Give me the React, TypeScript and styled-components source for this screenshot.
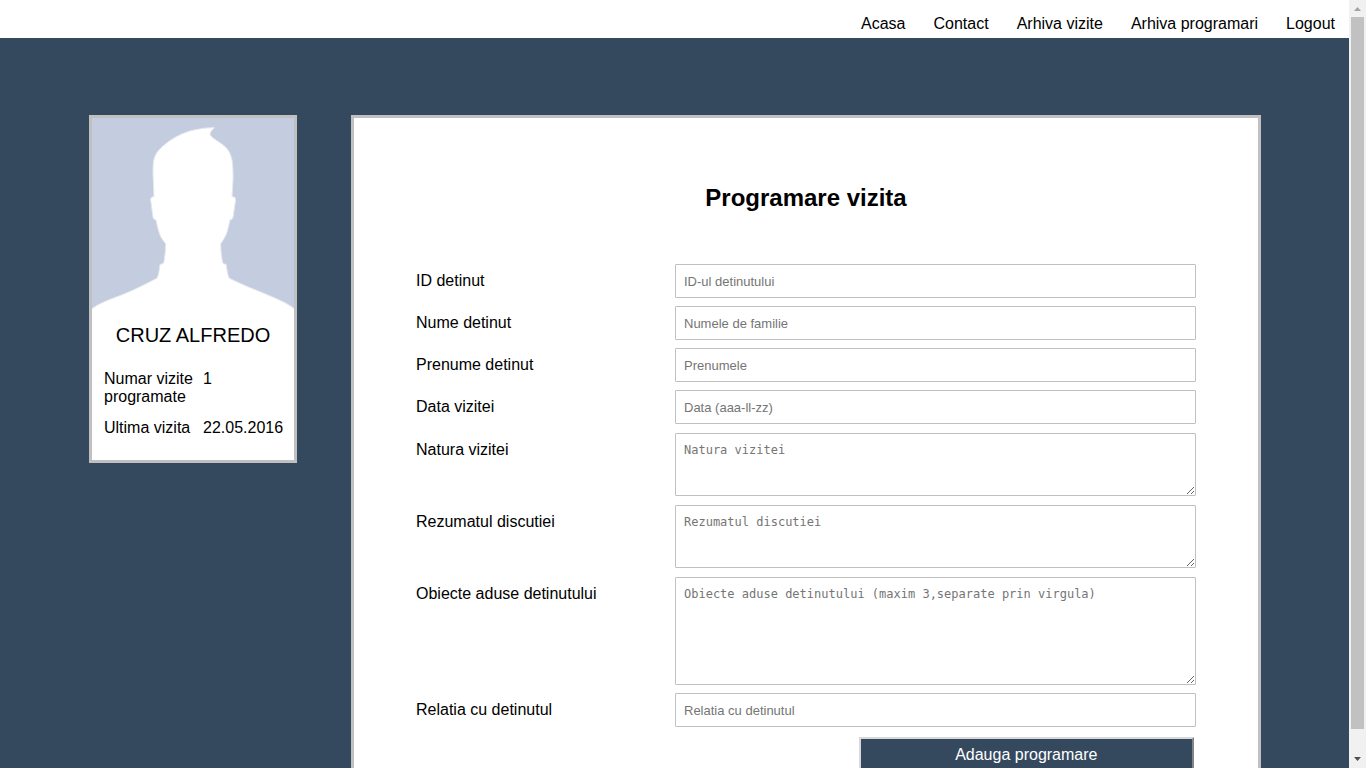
import React from 'react';
import styled, { createGlobalStyle } from 'styled-components';

const GlobalStyle = createGlobalStyle`
  * {
    box-sizing: border-box;
  }

  body {
    margin: 0;
    color: #000;
    background: #34495e;
    font: 16px/18px Arial, 'Liberation Sans', sans-serif;
  }
`;

const Shell = styled.div`
  display: flex;
  height: 100vh;
`;

const Page = styled.div`
  flex: 1;
  min-width: 0;
  overflow-y: auto;
  scrollbar-width: none;
`;

const Nav = styled.nav`
  display: flex;
  justify-content: flex-end;
  height: 38px;
  padding-top: 15px;
  background: #fff;
`;

const NavLink = styled.a`
  padding: 0 14px;
  color: #000;
  text-decoration: none;
`;

const Main = styled.main`
  display: flex;
  align-items: flex-start;
  gap: 54px;
  padding: 77px 88px 77px 89px;
`;

const Box = styled.section`
  border: 3px solid #c0c0c0;
  background: #fff;
`;

const ProfileCard = styled(Box)`
  flex: 0 0 208px;
  padding-bottom: 23px;
`;

const Avatar = styled.svg`
  display: block;
  width: 100%;
`;

const ProfileName = styled.p`
  margin: 14px 0 23px;
  font-size: 20px;
  line-height: 24px;
  text-align: center;
`;

const Stats = styled.dl`
  display: grid;
  grid-template-columns: 91px 1fr;
  gap: 13px 8px;
  margin: 0;
  padding: 0 8px 0 12px;

  dd {
    margin: 0;
  }
`;

const FormPanel = styled(Box)`
  flex: 1;
  min-width: 0;
  padding: 66px 62px;
`;

const Title = styled.h2`
  margin: 0 0 52px;
  font-size: 24px;
  line-height: 28px;
  text-align: center;
`;

const Form = styled.form`
  display: flex;
  flex-direction: column;
  gap: 8px;
`;

const Row = styled.div<{ $multiline?: boolean }>`
  display: grid;
  grid-template-columns: 259px 1fr;
  padding-top: ${(p) => (p.$multiline ? 1 : 0)}px;
`;

const Label = styled.label`
  padding-top: 8px;
`;

const TextInput = styled.input`
  width: 100%;
  height: 34px;
  padding: 0 8px;
  border: 1px solid #c0c0c0;
  border-radius: 1px;
  font: 13px Arial, 'Liberation Sans', sans-serif;

  &::placeholder {
    color: #757575;
  }
`;

const TextBox = styled.textarea<{ $height: number }>`
  display: block;
  width: 100%;
  height: ${(p) => p.$height}px;
  padding: 8px;
  border: 1px solid #c0c0c0;
  border-radius: 1px;
  font: 12px/16px 'DejaVu Sans Mono', monospace;

  &::placeholder {
    color: #757575;
  }
`;

const SubmitButton = styled.button`
  align-self: flex-end;
  width: 43%;
  height: 36px;
  margin: 2px 2px 0 0;
  border: 2px solid;
  border-color: #d9d9d9 #858585 #858585 #d9d9d9;
  color: #fff;
  background: #34495e;
  font: 16px Arial, 'Liberation Sans', sans-serif;
`;

const ScrollTrack = styled.div`
  display: flex;
  flex: 0 0 17px;
  flex-direction: column;
  background: #f1f1f1;
`;

const ScrollArrow = styled.svg`
  flex: none;
  width: 17px;
  height: 17px;
`;

const ScrollLane = styled.div`
  flex: 1;
  padding: 0 2px;
`;

const ScrollThumb = styled.div`
  height: 97%;
  background: #c1c1c1;
`;

const links = ['Acasa', 'Contact', 'Arhiva vizite', 'Arhiva programari', 'Logout'];

type Field = { id: string; label: string; placeholder: string; height?: number };

const fields: Field[] = [
  { id: 'id', label: 'ID detinut', placeholder: 'ID-ul detinutului' },
  { id: 'nume', label: 'Nume detinut', placeholder: 'Numele de familie' },
  { id: 'prenume', label: 'Prenume detinut', placeholder: 'Prenumele' },
  { id: 'data', label: 'Data vizitei', placeholder: 'Data (aaa-ll-zz)' },
  { id: 'natura', label: 'Natura vizitei', placeholder: 'Natura vizitei', height: 63 },
  { id: 'rezumat', label: 'Rezumatul discutiei', placeholder: 'Rezumatul discutiei', height: 63 },
  {
    id: 'obiecte',
    label: 'Obiecte aduse detinutului',
    placeholder: 'Obiecte aduse detinutului (maxim 3,separate prin virgula)',
    height: 108,
  },
  { id: 'relatia', label: 'Relatia cu detinutul', placeholder: 'Relatia cu detinutul' },
];

export default function App() {
  return (
    <Shell>
      <GlobalStyle />
      <Page>
        <Nav>
          {links.map((text) => (
            <NavLink key={text} href="#">
              {text}
            </NavLink>
          ))}
        </Nav>
        <Main>
          <ProfileCard>
            <Avatar viewBox="0 0 202 191" role="img" aria-label="CRUZ ALFREDO">
              <rect width="202" height="191" fill="#c4ccdf" />
              <path
                fill="#fff"
                stroke="#e6eaee"
                strokeWidth="1"
                d="M122.3 9.7C114 9.5 106 11 98 13C88 16 79 21 71.3 27.7C65 33 62.5 38 61.6 43C60.8 48 61 58 61.3 62L62 78.7C60 78.8 58.7 79 58.7 82L60.8 98C61.2 101 62 101.6 64 102C65.500 109 66.500 113 68 117C69.500 120.500 71.500 123 73.700 125.700C73.700 133 72.800 139 71.700 145C70 146 69 146 68 146.500C67.200 152 66.700 158 64.700 160.300C54 166 42 172 31.300 176.300C19 181 7 185 -1 191.500V194H203V191.500C196 185 184 180.500 168 173.700C157 169.500 147 165 137.300 160.300C135.600 157 135 152 134.200 146.500C133 146.200 132 146 130.700 145C129.500 139 128.700 133 128.700 125.700C131 122.500 133 119.500 134.700 115.300C136 111 137 106.500 138 102C140 101.500 140.800 101 141.200 98L143.600 82C143.600 79 142 78.800 140 78.700L141 62C141.100 55 141 48 140 42C139 37.500 137.500 33.500 134.700 30.300C130 25 119 20 118 16.300C118 13.500 120.500 12 122.300 9.700Z"
              />
            </Avatar>
            <ProfileName>CRUZ ALFREDO</ProfileName>
            <Stats>
              <dt>Numar vizite programate</dt>
              <dd>1</dd>
              <dt>Ultima vizita</dt>
              <dd>22.05.2016</dd>
            </Stats>
          </ProfileCard>
          <FormPanel>
            <Title>Programare vizita</Title>
            <Form>
              {fields.map(({ id, label, placeholder, height }) => (
                <Row key={id} $multiline={!!height}>
                  <Label htmlFor={id}>{label}</Label>
                  {height ? (
                    <TextBox id={id} placeholder={placeholder} $height={height} />
                  ) : (
                    <TextInput id={id} type="text" placeholder={placeholder} />
                  )}
                </Row>
              ))}
              <SubmitButton type="button">Adauga programare</SubmitButton>
            </Form>
          </FormPanel>
        </Main>
      </Page>
      <ScrollTrack aria-hidden="true">
        <ScrollArrow viewBox="0 0 17 17">
          <path d="M5 11L8.500 7L12 11Z" fill="#a3a3a3" />
        </ScrollArrow>
        <ScrollLane>
          <ScrollThumb />
        </ScrollLane>
        <ScrollArrow viewBox="0 0 17 17">
          <path d="M5 6L8.500 10L12 6Z" fill="#505050" />
        </ScrollArrow>
      </ScrollTrack>
    </Shell>
  );
}
